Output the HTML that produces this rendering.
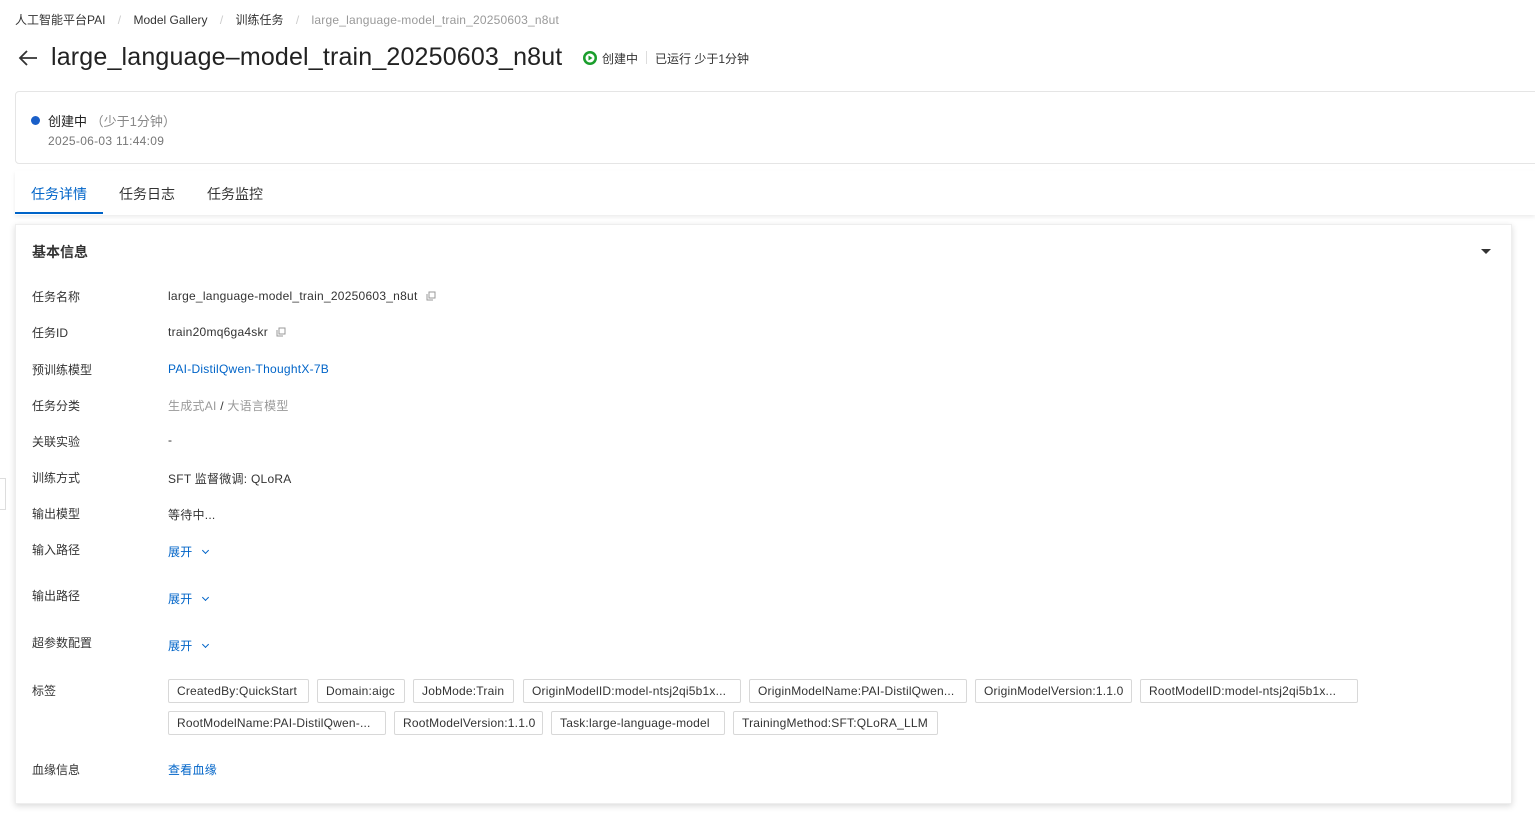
<!DOCTYPE html>
<html><head><meta charset="utf-8"><style>
*{margin:0;padding:0;box-sizing:border-box}
body{width:1535px;height:821px;background:#fff;font-family:"Liberation Sans","Noto Sans CJK SC",sans-serif;color:#333;position:relative;overflow:hidden;font-size:12px}
.a{position:absolute;white-space:nowrap}
.lbl{left:32px;font-size:12px;color:#333}
.val{left:168px;font-size:12px;color:#333;letter-spacing:0.25px}
.blue{color:#0064c8}
.tag{position:absolute;height:24px;border:1px solid #d8d8d8;border-radius:2px;padding:0 8px;line-height:22px;font-size:12px;color:#333;white-space:nowrap;overflow:hidden;letter-spacing:0.2px}
.copy{display:inline-block;width:10px;height:10px;margin-left:8px;vertical-align:-1px}
.chev{display:inline-block;width:5px;height:5px;border-right:1px solid #0064c8;border-bottom:1px solid #0064c8;transform:rotate(45deg);margin-left:10px;position:relative;top:-3px}
</style></head><body>
<div class="a" style="left:15px;top:11px;font-size:12px;color:#333">人工智能平台PAI <span style="color:#ccc;margin:0 9px">/</span> Model Gallery <span style="color:#ccc;margin:0 9px">/</span> 训练任务 <span style="color:#ccc;margin:0 9px">/</span> <span style="color:#999;letter-spacing:0.2px">large_language-model_train_20250603_n8ut</span></div>
<svg class="a" style="left:17px;top:48px" width="22" height="20" viewBox="0 0 22 20"><path d="M20 10H3M10 3L3 10l7 7" fill="none" stroke="#333" stroke-width="1.8"/></svg>
<div class="a" style="left:51px;top:43px;font-size:25px;color:#222;letter-spacing:0.17px">large_language–model_train_20250603_n8ut</div>
<svg class="a" style="left:582px;top:50px" width="16" height="16" viewBox="0 0 16 16"><circle cx="8" cy="8" r="7" fill="#1a9e2c"/><circle cx="8" cy="8" r="4.5" fill="#fff"/><path d="M6.5 5.5v5l4-2.5z" fill="#1a9e2c"/></svg>
<div class="a" style="left:602px;top:50px;font-size:12px;color:#333">创建中</div>
<div class="a" style="left:646px;top:51px;width:1px;height:13px;background:#ddd"></div>
<div class="a" style="left:655px;top:50px;font-size:12px;color:#333">已运行 少于1分钟</div>
<div class="a" style="left:15px;top:91px;width:1530px;height:73px;border:1px solid #e5e5e5;border-radius:4px"></div>
<div class="a" style="left:31px;top:116px;width:9px;height:9px;border-radius:50%;background:#1a5fc8"></div>
<div class="a" style="left:48px;top:111px;font-size:13px;color:#222">创建中 <span style="color:#888">（少于1分钟）</span></div>
<div class="a" style="left:48px;top:134px;font-size:12px;color:#777;letter-spacing:0.3px">2025-06-03 11:44:09</div>
<div class="a" style="left:15px;top:171px;width:1520px;height:44px;background:#fff;box-shadow:0 2px 4px rgba(0,0,0,.08)"></div>
<div class="a" style="left:31px;top:184px;font-size:14px;color:#0064c8">任务详情</div>
<div class="a" style="left:119px;top:184px;font-size:14px;color:#333">任务日志</div>
<div class="a" style="left:207px;top:184px;font-size:14px;color:#333">任务监控</div>
<div class="a" style="left:15px;top:212px;width:88px;height:2px;background:#0064c8"></div>
<div class="a" style="left:15px;top:224px;width:1497px;height:580px;background:#fff;border:1px solid #eee;box-shadow:0 2px 6px rgba(0,0,0,.15)"></div>
<div class="a" style="left:32px;top:242px;font-size:14px;font-weight:bold;color:#333">基本信息</div>
<div class="a" style="left:1481px;top:249px;width:0;height:0;border-left:5px solid transparent;border-right:5px solid transparent;border-top:5px solid #333"></div>
<div class="a" style="left:0;top:478px;width:6px;height:32px;border:1px solid #ddd;border-left:none;background:#fff"></div>
<div class="a lbl" style="top:288px">任务名称</div><div class="a val" style="top:289px">large_language-model_train_20250603_n8ut<svg class="copy" viewBox="0 0 10 10"><path d="M3 1h6v6H3z M1 3v6h6" fill="none" stroke="#999"/></svg></div>
<div class="a lbl" style="top:324px">任务ID</div><div class="a val" style="top:325px">train20mq6ga4skr<svg class="copy" viewBox="0 0 10 10"><path d="M3 1h6v6H3z M1 3v6h6" fill="none" stroke="#999"/></svg></div>
<div class="a lbl" style="top:361px">预训练模型</div><div class="a val blue" style="top:362px">PAI-DistilQwen-ThoughtX-7B</div>
<div class="a lbl" style="top:397px">任务分类</div><div class="a val" style="top:397px;color:#999">生成式AI <span style="color:#333">/</span> 大语言模型</div>
<div class="a lbl" style="top:433px">关联实验</div><div class="a val" style="top:433px">-</div>
<div class="a lbl" style="top:469px">训练方式</div><div class="a val" style="top:470px">SFT 监督微调: QLoRA</div>
<div class="a lbl" style="top:505px">输出模型</div><div class="a val" style="top:506px">等待中...</div>
<div class="a lbl" style="top:541px">输入路径</div><div class="a val blue" style="top:543px">展开<span class="chev"></span></div>
<div class="a lbl" style="top:587px">输出路径</div><div class="a val blue" style="top:590px">展开<span class="chev"></span></div>
<div class="a lbl" style="top:634px">超参数配置</div><div class="a val blue" style="top:637px">展开<span class="chev"></span></div>
<div class="a lbl" style="top:682px">标签</div>
<div class="tag" style="left:168px;top:679px;width:141px">CreatedBy:QuickStart</div>
<div class="tag" style="left:317px;top:679px;width:88px">Domain:aigc</div>
<div class="tag" style="left:413px;top:679px;width:101px">JobMode:Train</div>
<div class="tag" style="left:523px;top:679px;width:218px">OriginModelID:model-ntsj2qi5b1x...</div>
<div class="tag" style="left:749px;top:679px;width:218px">OriginModelName:PAI-DistilQwen...</div>
<div class="tag" style="left:975px;top:679px;width:157px">OriginModelVersion:1.1.0</div>
<div class="tag" style="left:1140px;top:679px;width:218px">RootModelID:model-ntsj2qi5b1x...</div>
<div class="tag" style="left:168px;top:711px;width:218px">RootModelName:PAI-DistilQwen-...</div>
<div class="tag" style="left:394px;top:711px;width:149px">RootModelVersion:1.1.0</div>
<div class="tag" style="left:551px;top:711px;width:174px">Task:large-language-model</div>
<div class="tag" style="left:733px;top:711px;width:205px">TrainingMethod:SFT:QLoRA_LLM</div>
<div class="a lbl" style="top:761px">血缘信息</div><div class="a val blue" style="top:761px">查看血缘</div>
</body></html>
